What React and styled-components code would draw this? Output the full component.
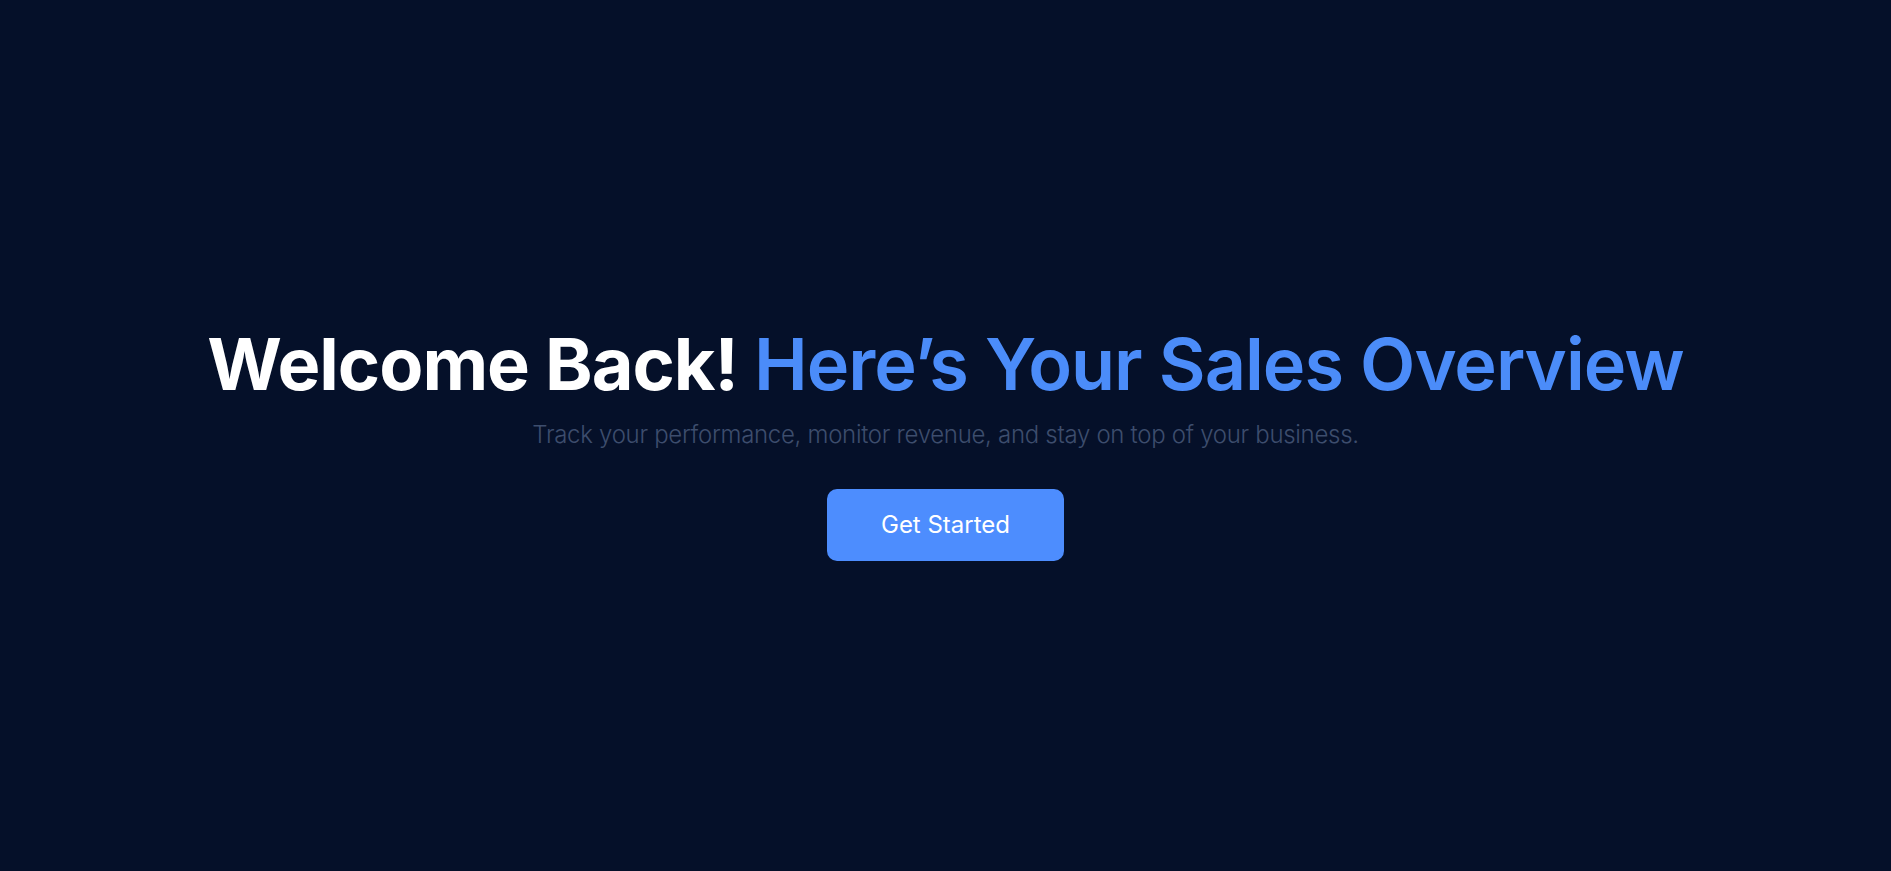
import React from 'react';
import styled, { createGlobalStyle } from 'styled-components';

const GlobalStyle = createGlobalStyle`
    * { box-sizing: border-box; }
    html, body {
        margin: 0;
        padding: 0;
        background-color: #051029;
        font-family: Inter, "Noto Sans", sans-serif;
    }
`;

const App = () => {
    return (
        <>
            <GlobalStyle />
            <HeroStyled className='Hero'>
                <h1 className="title">
                    Welcome Back! <span className="accent">Here’s Your Sales Overview</span>
                </h1>
                <p className="subtitle">
                    Track your performance, monitor revenue, and stay on top of your business.
                </p>
                <CtaButton type="button">Get Started</CtaButton>
            </HeroStyled>
        </>
    );
}

export default App;

const HeroStyled = styled.section`
    min-height: 100vh;
    display: flex;
    flex-direction: column;
    align-items: center;
    justify-content: center;
    text-align: center;
    padding-top: 14px;

    .title {
        margin: 0;
        color: #ffffff;
        font-size: 72px;
        font-weight: 700;
        letter-spacing: -1px;
        line-height: 1.1;

        .accent {
            color: #4b8cf9;
            font-weight: 600;
        }
    }

    .subtitle {
        margin: 16px 0 0;
        color: #3d4d6d;
        font-size: 24px;
        font-weight: 300;
        letter-spacing: -0.3px;
    }
`;

const CtaButton = styled.button`
    margin-top: 40px;
    width: 237px;
    height: 72px;
    border: none;
    border-radius: 10px;
    background-color: #4d8dfe;
    color: #ffffff;
    font-family: Inter, "Noto Sans", sans-serif;
    font-size: 24px;
    font-weight: 400;
    cursor: pointer;
`;
